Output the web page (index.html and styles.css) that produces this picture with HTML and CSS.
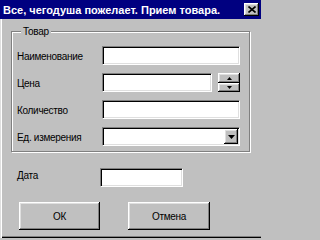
FILE: index.html
```html
<!DOCTYPE html>
<html lang="ru">
<head>
<meta charset="utf-8">
<title>Прием товара</title>
<link rel="stylesheet" href="styles.css">
</head>
<body>
<div class="window">
  <div class="titlebar">
    <span class="title">Все, чегодуша пожелает. Прием товара.</span>
    <span class="close"><svg width="8" height="7" viewBox="0 0 8 7"><path d="M0.5 0.5 L7.5 6.5 M7.5 0.5 L0.5 6.5" stroke="#000" stroke-width="1.6" fill="none"/></svg></span>
  </div>
  <div class="content">
    <div class="group">
      <span class="group-title">Товар</span>
      <div class="row">
        <span class="label">Наименование</span>
        <span class="field"></span>
      </div>
      <div class="row">
        <span class="label">Цена</span>
        <span class="field field-short"></span>
        <span class="spin">
          <span class="spin-btn"><svg width="5" height="3" viewBox="0 0 5 3"><path d="M2.5 0 L5 3 L0 3 Z" fill="#000"/></svg></span>
          <span class="spin-btn"><svg width="5" height="3" viewBox="0 0 5 3"><path d="M0 0 L5 0 L2.5 3 Z" fill="#000"/></svg></span>
        </span>
      </div>
      <div class="row">
        <span class="label">Количество</span>
        <span class="field"></span>
      </div>
      <div class="row">
        <span class="label">Ед. измерения</span>
        <span class="field combo">
          <span class="combo-btn"><svg width="7" height="4" viewBox="0 0 7 4"><path d="M0 0 L7 0 L3.5 4 Z" fill="#000"/></svg></span>
        </span>
      </div>
    </div>
    <div class="date-row">
      <span class="label date-label">Дата</span>
      <span class="field date-field"></span>
    </div>
    <div class="buttons">
      <span class="btn">ОК</span>
      <span class="btn btn-cancel">Отмена</span>
    </div>
  </div>
</div>
</body>
</html>
```

FILE: styles.css
```css
* { box-sizing: border-box; }

body {
  margin: 0;
  font-family: "Liberation Sans", Arial, sans-serif;
  font-size: 10px;
  letter-spacing: -0.3px;
  color: #000;
  background: #c0c0c0;
}

.window {
  width: 261px;
  height: 238px;
  background: #c0c0c0;
  box-shadow: inset 1px 0 #dfdfdf, inset 2px 0 #fff, inset 0 -1px #000, inset 0 -2px #808080;
  display: flex;
  flex-direction: column;
  overflow: hidden;
}

.titlebar {
  height: 19px;
  background: #000080;
  color: #fff;
  display: flex;
  align-items: center;
  justify-content: space-between;
  padding: 0 2px 0 3px;
  font-weight: bold;
  font-size: 11px;
  letter-spacing: 0;
  white-space: nowrap;
}

.close {
  width: 15px;
  height: 13px;
  background: #c0c0c0;
  box-shadow: inset -1px -1px #000, inset 1px 1px #fff, inset -2px -2px #808080, inset 2px 2px #dfdfdf;
  display: flex;
  align-items: center;
  justify-content: center;
}

.content {
  padding: 12px 10px 0 11px;
  display: flex;
  flex-direction: column;
}

.group {
  position: relative;
  width: 239px;
  height: 121px;
  border: 1px solid #808080;
  box-shadow: inset 1px 1px #fff, 1px 1px #fff;
  padding: 14px 9px 5px 5px;
  display: flex;
  flex-direction: column;
  gap: 8px;
}

.group-title {
  position: absolute;
  top: -7px;
  left: 9px;
  padding: 0 2px;
  background: #c0c0c0;
  line-height: 13px;
}

.row {
  display: flex;
  align-items: center;
  height: 19px;
}

.label {
  width: 85px;
  flex: none;
  white-space: nowrap;
  padding-top: 2px;
}

.field {
  position: relative;
  display: block;
  width: 138px;
  height: 19px;
  background: #fff;
  border: 1px solid;
  border-color: #808080 #fff #fff #808080;
  box-shadow: inset 1px 1px #000, inset -1px -1px #dfdfdf;
  flex: none;
}

.field-short {
  width: 110px;
}

.spin {
  margin-left: 6px;
  width: 22px;
  height: 19px;
  display: grid;
  grid-template-rows: 10px 9px;
  flex: none;
}

.spin-btn,
.combo-btn,
.btn {
  background: #c0c0c0;
  box-shadow: inset -1px -1px #000, inset 1px 1px #fff, inset -2px -2px #808080, inset 2px 2px #dfdfdf;
  display: flex;
  align-items: center;
  justify-content: center;
}

.combo {
  display: flex;
  justify-content: flex-end;
  padding: 1px;
}

.combo-btn {
  width: 14px;
  height: 15px;
}

.date-row {
  margin-top: 16px;
  padding-left: 6px;
  display: flex;
  align-items: flex-start;
}

.date-label {
  width: 83px;
  padding-top: 2px;
}

.date-field {
  width: 83px;
}

.buttons {
  margin-top: 15px;
  padding-left: 8px;
  display: flex;
  gap: 28px;
}

.btn {
  width: 81px;
  height: 28px;
}

.btn-cancel {
  width: 82px;
}
```
